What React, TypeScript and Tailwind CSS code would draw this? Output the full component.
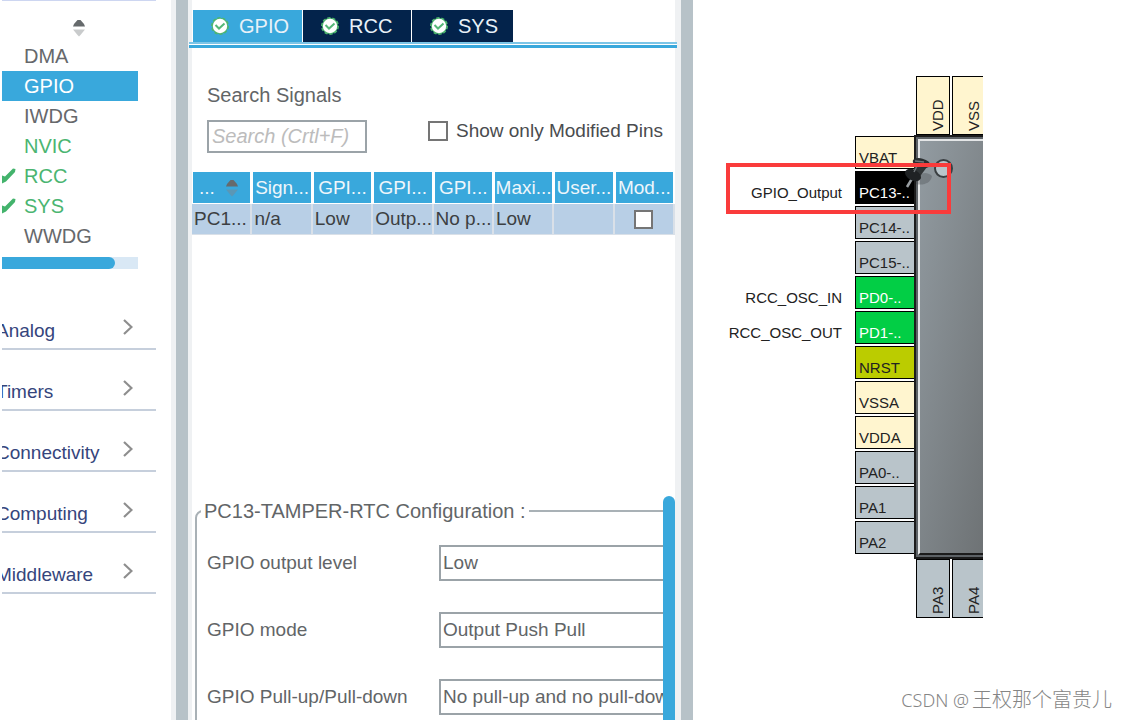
import { useState } from "react";
import clsx from "clsx";

interface Peripheral { name: string; state?: "enabled" | "configured" }
interface Pin { name: string; kind: keyof typeof PIN_STYLES; signal?: string }

const PERIPHERALS: Peripheral[] = [
  { name: "DMA" },
  { name: "GPIO" },
  { name: "IWDG" },
  { name: "NVIC", state: "enabled" },
  { name: "RCC", state: "configured" },
  { name: "SYS", state: "configured" },
  { name: "WWDG" },
];

const CATEGORIES = ["Analog", "Timers", "Connectivity", "Computing", "Middleware"];

const TABS = [
  { name: "GPIO", width: "w-[109px]" },
  { name: "RCC", width: "w-[108px]" },
  { name: "SYS", width: "w-[101px]" },
];

const COLUMNS = ["...", "Sign...", "GPI...", "GPI...", "GPI...", "Maxi...", "User...", "Mod..."];
const CELLS = ["PC1...", "n/a", "Low", "Outp...", "No p...", "Low", ""];

const SETTINGS = [
  { id: "level", label: "GPIO output level", options: ["Low", "High"] },
  { id: "mode", label: "GPIO mode", options: ["Output Push Pull", "Output Open Drain"] },
  { id: "pull", label: "GPIO Pull-up/Pull-down", options: ["No pull-up and no pull-down", "Pull-up", "Pull-down"] },
];

const PIN_STYLES = {
  power: "bg-[#fff5cf] text-[#222]",
  selected: "bg-black text-white",
  free: "bg-[#b9c4ca] text-[#222]",
  used: "bg-[#02ce45] text-white",
  reset: "bg-[#bbcc00] text-[#222]",
};

const LEFT_PINS: Pin[] = [
  { name: "VBAT", kind: "power" },
  { name: "PC13-..", kind: "selected", signal: "GPIO_Output" },
  { name: "PC14-..", kind: "free" },
  { name: "PC15-..", kind: "free" },
  { name: "PD0-..", kind: "used", signal: "RCC_OSC_IN" },
  { name: "PD1-..", kind: "used", signal: "RCC_OSC_OUT" },
  { name: "NRST", kind: "reset" },
  { name: "VSSA", kind: "power" },
  { name: "VDDA", kind: "power" },
  { name: "PA0-..", kind: "free" },
  { name: "PA1", kind: "free" },
  { name: "PA2", kind: "free" },
];

const TOP_PINS: Pin[] = [{ name: "VDD", kind: "power" }, { name: "VSS", kind: "power" }];
const BOTTOM_PINS: Pin[] = [{ name: "PA3", kind: "free" }, { name: "PA4", kind: "free" }];

function SortIcon({ lower = "#c9cbcc" }: { lower?: string }) {
  return (
    <svg viewBox="0 0 14 18" className="h-[18px] w-[14px] shrink-0" aria-hidden="true">
      <path d="M1 7.5 L2 5 L5.5 1 H8.5 L12 5 L13 7.5 Z" fill="#666a6c" />
      <path d="M1 10.5 H13 L8.5 16 L7 17.5 L5.5 16 Z" fill={lower} />
    </svg>
  );
}

function TickIcon() {
  return (
    <svg viewBox="0 0 15 17" className="h-[17px] w-[15px]" aria-hidden="true">
      <path d="M0 7.5 L3 8.5 L9 2.5 L11 0.5 L13.5 1 L13 4 L4 13.5 L0 15.5 Z" fill="#43b36c" />
    </svg>
  );
}

function BadgeIcon() {
  return (
    <svg viewBox="0 0 18 18" className="h-[18px] w-[18px] shrink-0" aria-hidden="true">
      <circle cx="9" cy="9" r="8" fill="#4db56e" />
      <circle cx="9" cy="9" r="8.2" fill="none" stroke="#4db56e" strokeWidth="1.6" strokeDasharray="3.2 1.9" />
      <circle cx="9" cy="9" r="7.2" fill="#fff" />
      <path d="M4.5 8 L8 11.5 L13.5 6.5" fill="none" stroke="#55b877" strokeWidth="2" />
    </svg>
  );
}

function Sidebar() {
  const [selected, setSelected] = useState("GPIO");
  return (
    <aside className="w-[171px] shrink-0 overflow-hidden pl-[2px]">
      <div className="w-[154px] overflow-hidden border-t border-[#cdd6f1]">
        <button type="button" aria-label="Sort" className="mx-auto mt-[18px] flex w-[16px] justify-center">
          <SortIcon />
        </button>
        <div className="w-[136px]">
          <ul className="mt-1">
            {PERIPHERALS.map((p) => (
              <li key={p.name}>
                <button
                  type="button"
                  onClick={() => setSelected(p.name)}
                  className={clsx(
                    "flex h-[30px] w-full items-center text-xl",
                    selected === p.name
                      ? "bg-[#39a8dc] text-white"
                      : p.state ? "text-[#4bb571]" : "text-[#66686b]",
                  )}
                >
                  <span className="w-[22px]">{p.state === "configured" && <TickIcon />}</span>
                  {p.name}
                </button>
              </li>
            ))}
          </ul>
          <div className="mt-[6px] h-3 bg-[#d9e8f5]">
            <div className="h-full w-[113px] rounded-r-full bg-[#39a8dc]" />
          </div>
        </div>
        <nav className="mt-5">
          {CATEGORIES.map((c) => (
            <button
              key={c}
              type="button"
              className="flex h-[61px] w-full items-end justify-between border-b-2 border-[#c6cfdc] pr-[23px] pb-[3px] text-[19px] leading-7 text-[#35457c]"
            >
              <span className="-ml-[6px]">{c}</span>
              <svg viewBox="0 0 10 16" className="mb-[10px] h-4 w-[10px]" aria-hidden="true">
                <path d="M1 1 L8.5 8 L1 15" fill="none" stroke="#8e8e8e" strokeWidth="2.2" />
              </svg>
            </button>
          ))}
        </nav>
      </div>
    </aside>
  );
}

function Tabs() {
  const [active, setActive] = useState("GPIO");
  return (
    <div role="tablist" className="flex gap-px pt-[10px] pl-px">
      {TABS.map((t) => (
        <button
          key={t.name}
          type="button"
          role="tab"
          aria-selected={active === t.name}
          onClick={() => setActive(t.name)}
          className={clsx(
            "flex h-8 items-center gap-[10px] pl-[18px] text-xl text-[#e8f1f8]",
            t.width,
            active === t.name ? "bg-[#39a8dc]" : "bg-[#03234b]",
          )}
        >
          <BadgeIcon />
          {t.name}
        </button>
      ))}
    </div>
  );
}

const BOX = "appearance-none border-2 border-[#757575] bg-white";

function SignalTable() {
  return (
    <table className="mt-[19px] w-full table-fixed border-separate border-spacing-0 text-[19px] leading-7">
      <thead>
        <tr>
          {COLUMNS.map((c, i) => (
            <th
              key={i}
              className="h-8 border-r-2 border-b border-l border-white bg-[#39a8dc] bg-clip-padding p-0 font-normal whitespace-nowrap text-[#eef6fb]"
            >
              {i === 0 ? (
                <span className="flex items-center gap-[10px] pl-[6px]">{c}<SortIcon lower="#5b97b5" /></span>
              ) : c}
            </th>
          ))}
        </tr>
      </thead>
      <tbody>
        <tr className="text-[#3c3f42]">
          {CELLS.map((c, i) => (
            <td key={i} className="h-[31px] border-r-2 border-b border-[#d9e0e8] bg-[#b8cfe6] p-0 pl-[2px] whitespace-nowrap">{c}</td>
          ))}
          <td className="h-[31px] border-r-2 border-b border-[#d9e0e8] bg-[#b8cfe6] p-0">
            <input type="checkbox" aria-label="Modified" className={clsx(BOX, "mx-auto block h-[19px] w-[19px]")} />
          </td>
        </tr>
      </tbody>
    </table>
  );
}

function ConfigPane() {
  return (
    <div className="flex h-[224px] shrink-0">
      <div className="min-w-0 flex-1 overflow-hidden pl-[3px] text-[#626567]">
        <fieldset className="mt-px w-[calc(100%+20px)] rounded-lg border-2 border-[#a9b1b6] pl-[10px]">
          <legend className="-ml-[6px] px-[3px] text-xl">PC13-TAMPER-RTC Configuration :</legend>
          <div className="flex flex-col gap-[31px] pt-5 pb-5 text-[19px] leading-7">
            {SETTINGS.map((s) => (
              <div key={s.id} className="grid grid-cols-[232px_minmax(0,1fr)] items-center">
                <label htmlFor={s.id}>{s.label}</label>
                <select id={s.id} className="h-9 appearance-none border-2 border-[#9ba3a8] bg-white pl-[2px]">
                  {s.options.map((o) => <option key={o}>{o}</option>)}
                </select>
              </div>
            ))}
          </div>
        </fieldset>
      </div>
      <div className="w-3 rounded-t-full bg-[#39a8dc]" />
    </div>
  );
}

function ConfigPanel() {
  return (
    <main className="flex w-[483px] shrink-0 flex-col">
      <Tabs />
      <div className="relative z-10 -mr-[2px] -ml-[3px] h-[6px] border-t-2 border-b-[3px] border-t-[#7cc5e7] border-b-[#39a8dc] bg-white" />
      <div className="flex-1">
        <div className="flex items-start justify-between pt-[33px] pr-3 pl-[15px]">
          <div className="flex flex-col">
            <label htmlFor="search" className="text-xl text-[#626567]">Search Signals</label>
            <input
              id="search"
              type="text"
              placeholder="Search (Crtl+F)"
              className="mt-[11px] h-[33px] w-[160px] border-2 border-[#9ba3a8] px-[3px] text-xl italic outline-none placeholder:text-[#bcbcbc]"
            />
          </div>
          <label className="mt-9 flex items-center gap-2 text-[19px] leading-7 text-[#4a4c4f]">
            <input type="checkbox" className={clsx(BOX, "h-5 w-5")} />
            Show only Modified Pins
          </label>
        </div>
        <SignalTable />
      </div>
      <ConfigPane />
    </main>
  );
}

function VerticalPins({ pins }: { pins: Pin[] }) {
  return (
    <div className="ml-[2px] flex gap-[2px] overflow-hidden">
      {pins.map((p) => (
        <div
          key={p.name}
          className={clsx(
            "flex h-[59px] w-[34px] shrink-0 rotate-180 items-end border border-black pt-[3px] [writing-mode:vertical-rl]",
            PIN_STYLES[p.kind],
          )}
        >
          <span className="leading-[22px]">{p.name}</span>
        </div>
      ))}
    </div>
  );
}

function PushPin() {
  return (
    <svg viewBox="0 0 34 34" className="absolute top-[155px] left-[210px] h-[34px] w-[34px]" aria-hidden="true">
      <path d="M13 25 C16 19 22 15 29 21 C28 28 20 31 13 29 Z" fill="#3a3f42" opacity="0.3" />
      <path d="M10 22 L4 32" stroke="#9a9fa3" strokeWidth="2.5" />
      <path d="M10 21 L12 8 L24 12 L15 24 Z" fill="#303436" />
      <ellipse cx="10" cy="20" rx="8.5" ry="5.5" transform="rotate(28 10 20)" fill="#1f2224" />
      <ellipse cx="18.5" cy="8" rx="9" ry="4.5" transform="rotate(14 18.5 8)" fill="#2b2f31" />
      <path d="M14 11 L11 17 M12 6 L21 7" stroke="#70767a" strokeWidth="1.5" fill="none" />
    </svg>
  );
}

function Pinout() {
  return (
    <section className="relative min-w-0 flex-1 overflow-hidden bg-white text-[15px] leading-5 text-[#222]">
      <div className="flex pt-[76px]">
        <div className="flex flex-col gap-[2px] pt-[60px]">
          {LEFT_PINS.map((p) => (
            <div key={p.name} className="flex h-[33px] items-end gap-[13px]">
              <span className="w-[149px] pb-px text-right">{p.signal}</span>
              <span className={clsx("flex h-full w-[59px] items-end border border-r-0 border-black pl-[3px]", PIN_STYLES[p.kind])}>
                {p.name}
              </span>
            </div>
          ))}
        </div>
        <div className="w-[69px] overflow-hidden">
          <VerticalPins pins={TOP_PINS} />
          <div className="h-[424px] w-[90px] border-2 border-[#1c1c1c] bg-[#5d6266] p-[2px]">
            <div className="relative h-full border-t-2 border-b-2 border-l-2 border-t-[#e4e6e7] border-b-[#1c1c1c] border-l-[#e4e6e7] bg-linear-to-br from-[#929ba1] to-[#6a6e70]">
              <div className="absolute top-[18px] left-[14px] h-[19px] w-[19px] rounded-full border-2 border-[#3a3f42] bg-[#b9c4ca]" />
            </div>
          </div>
          <VerticalPins pins={BOTTOM_PINS} />
        </div>
      </div>
      <PushPin />
      <div className="absolute top-[163px] left-[33px] h-[51px] w-[225px] border-4 border-[#fa3b3b]" />
      <p className="absolute right-[14px] bottom-[6px] flex items-baseline gap-[3px] font-['Noto_Sans_CJK_SC',sans-serif] text-xl font-light text-[#858585]">
        <span className="font-['Noto_Sans',sans-serif] text-lg">CSDN @</span>
        王权那个富贵儿
      </p>
    </section>
  );
}

export default function App() {
  return (
    <div className="flex h-screen overflow-hidden bg-white font-['Liberation_Sans',Arial,sans-serif]">
      <Sidebar />
      <div className="w-[21px] shrink-0 border-r-4 border-l-[5px] border-[#eff1f3] bg-[#b7c2c8]" />
      <ConfigPanel />
      <div className="w-[18px] shrink-0 border-l-[6px] border-[#eff1f3] bg-[#b7c2c8]" />
      <Pinout />
    </div>
  );
}
